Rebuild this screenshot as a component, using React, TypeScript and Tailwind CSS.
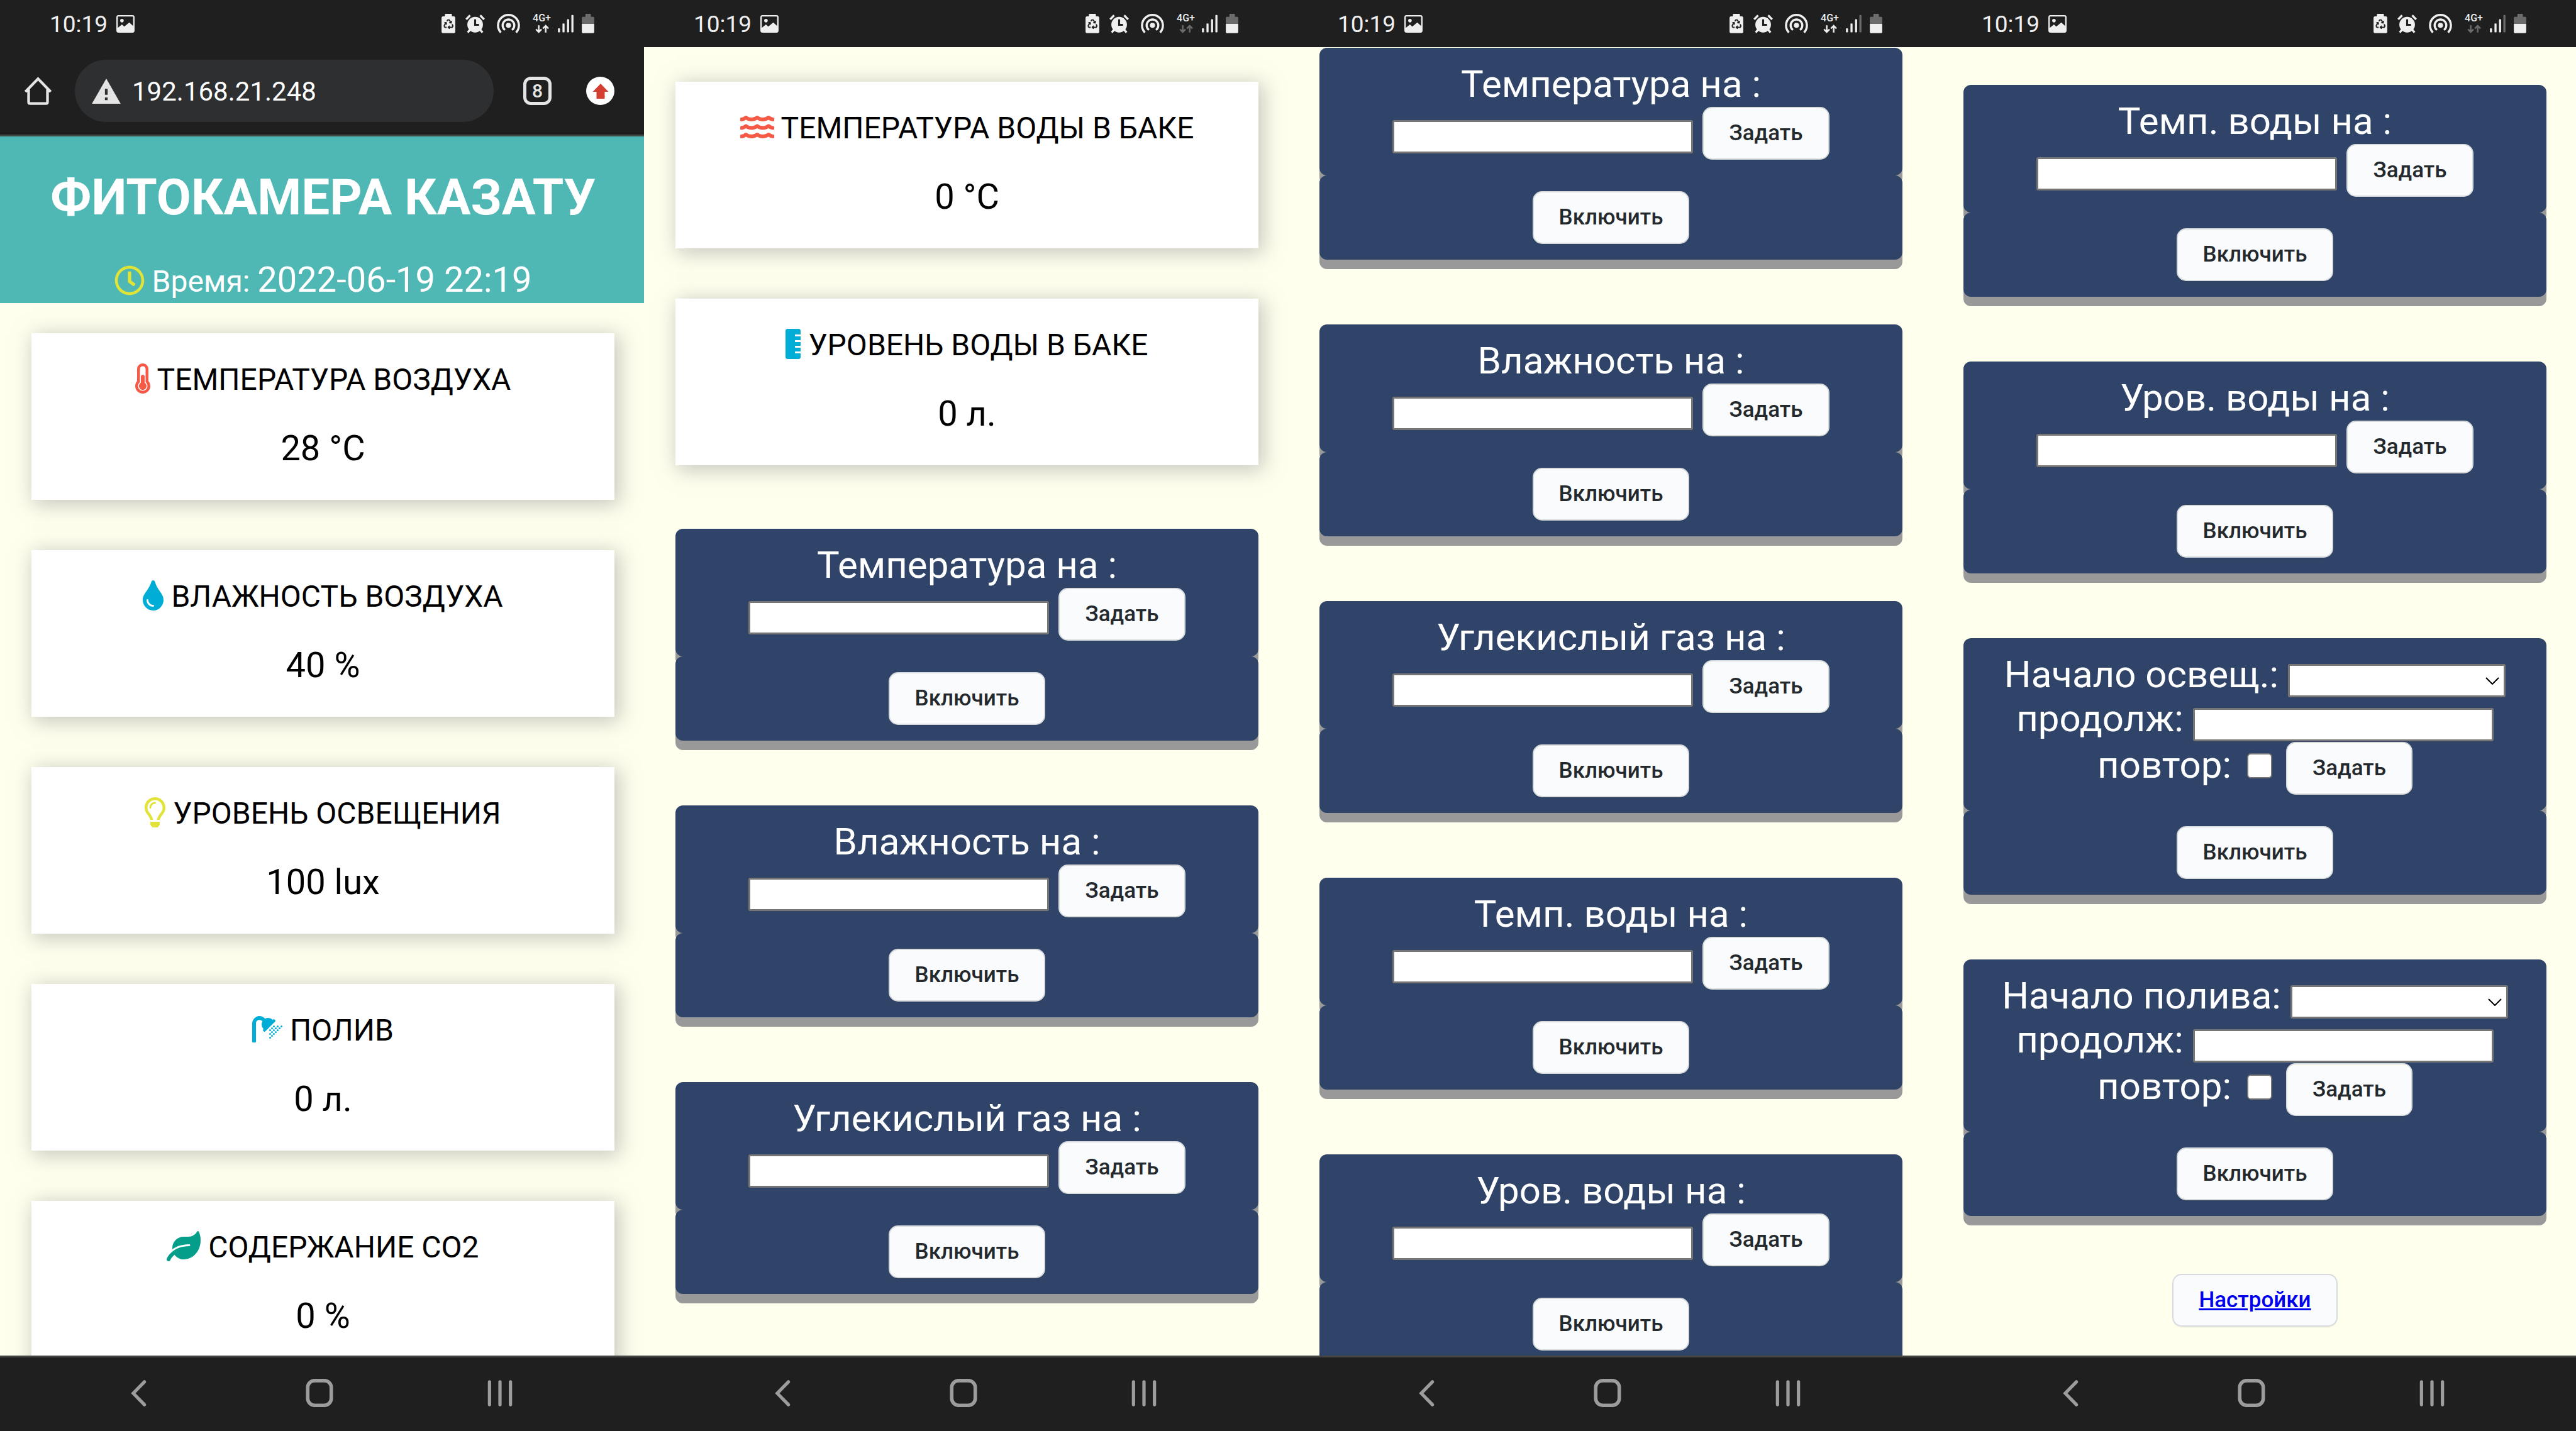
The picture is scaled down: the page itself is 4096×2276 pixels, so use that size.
import { useId, type ReactNode } from "react";
import {
  FaLeaf,
  FaRecycle,
  FaRegClock,
  FaRegLightbulb,
  FaRulerVertical,
  FaShower,
  FaThermometerHalf,
  FaTint,
  FaWater,
} from "react-icons/fa";

/* ---------- System bars ---------- */

type SignalProps = { weakSignal?: boolean; idleData?: boolean };

function StatusBar({ weakSignal = false, idleData = false }: SignalProps) {
  return (
    <header className="flex h-[75px] shrink-0 items-center bg-[#1f1f1f] pl-[79px] pr-[79px] text-[#efefef]">
      <span className="pt-[2px] text-[37px] leading-none">10:19</span>
      <svg viewBox="0 0 31 30" className="ml-[14px] h-[28px] w-[29px]" aria-hidden="true">
        <rect x="1.2" y="1.2" width="28.6" height="27.6" rx="2.5" fill="none" stroke="currentColor" strokeWidth="2.4" />
        <circle cx="9.5" cy="9.5" r="3" fill="currentColor" />
        <path d="M2 22 L9.500 16 L13.500 19.500 L22 12.500 L29 19 V28 H2 Z" fill="currentColor" />
      </svg>

      <svg viewBox="33 40 69 98" className="ml-auto h-[31px] w-[22px]" aria-hidden="true">
        <rect x="50" y="40" width="35" height="20" rx="4" fill="currentColor" />
        <rect x="33" y="53" width="69" height="84" rx="8" fill="currentColor" />
        <FaRecycle x={43} y={67} size={50} color="#1f1f1f" />
      </svg>
      <svg viewBox="151 41 100 96" className="ml-[16px] h-[30px] w-[31px]" aria-hidden="true">
        <g fill="none" stroke="currentColor" strokeWidth="11">
          <path d="M155 66 L175 45 M227 45 L247 66" />
          <path d="M163 133 L176 118 M239 133 L226 118" />
        </g>
        <circle cx="201" cy="93" r="40" fill="currentColor" />
        <path d="M201 66 V94 H221" fill="none" stroke="#1f1f1f" strokeWidth="10" />
      </svg>
      <svg viewBox="309 36 118 100" className="ml-[19px] h-[31px] w-[37px]" aria-hidden="true">
        <circle cx="368" cy="95" r="13" fill="currentColor" />
        <g fill="none" stroke="currentColor" strokeWidth="11">
          <path d="M350 119 A30 30 0 1 1 386 119" />
          <path d="M329 132 A53.500 53.500 0 1 1 407 132" />
        </g>
      </svg>
      <div className="ml-[20px] flex w-[29px] flex-col items-center">
        <span className="text-[16px] font-medium leading-[14px]">4G+</span>
        <svg viewBox="500 98 70 44" className="mt-[3px] h-[14px] w-[22px]" aria-hidden="true">
          <g fill="none" stroke={idleData ? "#6b6b6b" : "currentColor"} strokeWidth="8">
            <path d="M518 102 V136 M504 122 L518 136 L532 122" />
            <path d="M553 138 V104 M539 118 L553 104 L567 118" />
          </g>
        </svg>
      </div>
      <svg viewBox="614 44 83 93" className="ml-[11px] h-[29px] w-[25px]" fill="currentColor" aria-hidden="true">
        <rect x="614.500" y="115" width="11" height="22" rx="4" />
        <rect x="638.500" y="90" width="11" height="47" rx="4" />
        <rect x="662.500" y="67" width="11" height="70" rx="4" />
        <rect x="685.500" y="45" width="11" height="92" rx="4" fill={weakSignal ? "#6b6b6b" : "currentColor"} />
      </svg>
      <svg viewBox="738 39 63 99" className="ml-[13px] h-[31px] w-[20px]" aria-hidden="true">
        <rect x="756" y="39" width="28" height="20" rx="4" fill="#6b6b6b" />
        <path d="M743 54 H796 Q801 54 801 59 V90 H738 V59 Q738 54 743 54 Z" fill="#6b6b6b" />
        <path d="M738 90 H801 V132 Q801 137 796 137 H743 Q738 137 738 132 Z" fill="currentColor" />
      </svg>
    </header>
  );
}

function BrowserBar() {
  return (
    <div className="flex h-[142px] shrink-0 items-center border-b-[3px] border-[#3d4746] bg-[#1f1f1f] pl-[38px] pr-[47px] text-[#e4e4e4]">
      <button type="button" aria-label="Домой">
        <svg viewBox="0 0 48 48" className="size-[45px]" aria-hidden="true">
          <path
            d="M2.500 25.500 L24 3.500 L45.500 25.500 M8 21 V43 Q8 45.500 10.500 45.500 H37.500 Q40 45.500 40 43 V21"
            fill="none"
            stroke="currentColor"
            strokeWidth="4.600"
          />
        </svg>
      </button>
      <div className="ml-[36px] flex h-[99px] flex-1 items-center rounded-full bg-[#2e2f31] pl-[27px]">
        <svg viewBox="0 0 48 42" className="h-[40px] w-[46px] shrink-0" aria-hidden="true">
          <path d="M24 0 L48 42 H0 Z" fill="currentColor" />
          <path d="M24 17 V27 M24 31.500 V36" stroke="#2e2f31" strokeWidth="4.500" />
        </svg>
        <input
          type="text"
          aria-label="Адрес"
          defaultValue="192.168.21.248"
          className="ml-[18px] h-[70px] w-full min-w-0 flex-1 bg-transparent pt-[2px] text-[42px] text-white outline-none"
        />
      </div>
      <button
        type="button"
        className="ml-[47px] flex size-[45px] items-center justify-center rounded-[12px] border-[5px] border-[#e4e4e4] text-[30px] font-medium leading-none"
      >
        8
      </button>
      <button
        type="button"
        aria-label="Обновить"
        className="ml-[55px] flex size-[45px] items-center justify-center rounded-full bg-white"
      >
        <svg viewBox="0 0 24 24" className="size-[26px]" aria-hidden="true">
          <path d="M12 1 L23.500 13 H18 V23 H6 V13 H0.500 Z" fill="#d23f31" />
        </svg>
      </button>
    </div>
  );
}

function NavigationBar() {
  return (
    <nav className="flex h-[120px] shrink-0 items-center justify-between border-t-[3px] border-[#444543] bg-[#1f1f1f] pb-[4px] pl-[198px] pr-[207px] text-[#9c9c9c]">
      <button type="button" aria-label="Назад" className="flex w-[44px] justify-center">
        <svg viewBox="0 0 26 44" className="h-[42px] w-[25px]" aria-hidden="true">
          <path d="M22.500 3 L4 22 L22.500 41" fill="none" stroke="currentColor" strokeWidth="5.500" strokeLinecap="round" />
        </svg>
      </button>
      <button type="button" aria-label="Главный экран" className="flex w-[44px] justify-center">
        <svg viewBox="0 0 46 48" className="h-[45px] w-[44px]" aria-hidden="true">
          <rect x="3" y="3" width="40" height="42" rx="12" fill="none" stroke="currentColor" strokeWidth="6" />
        </svg>
      </button>
      <button type="button" aria-label="Недавние" className="flex w-[44px] justify-center">
        <svg viewBox="0 0 42 44" className="h-[42px] w-[40px]" aria-hidden="true">
          <path d="M3.500 3 V41 M21 3 V41 M38.500 3 V41" fill="none" stroke="currentColor" strokeWidth="5.500" strokeLinecap="round" />
        </svg>
      </button>
    </nav>
  );
}

function Phone({ bar, children, ...signal }: SignalProps & { bar?: ReactNode; children: ReactNode }) {
  return (
    <section className="flex h-screen min-w-0 flex-col overflow-hidden">
      <StatusBar {...signal} />
      {bar}
      <main className="min-h-0 flex-1 overflow-hidden bg-[#ffffee]">{children}</main>
      <NavigationBar />
    </section>
  );
}

/* ---------- Page content ---------- */

const buttonBase =
  "rounded-[15px] border-2 border-[#d7dadd] bg-[#fafbfc] px-[40px] py-[15px] text-[35px] leading-[50px] font-medium shadow-[0_2px_0_rgba(27,31,35,0.04)]";
const buttonClass = `${buttonBase} text-[#24292e]`;
const fieldClass = "h-[53px] rounded-[3px] border-[3px] border-[#767676] bg-white text-[33px] text-black";
const panelClass = "rounded-[12px] bg-[#2f4468] py-[25px] shadow-[0_15px_0_#999999]";
const iconClass = "inline-block h-[48px] align-[-6px]";

function ReadingCard({ icon, title, value }: { icon: ReactNode; title: string; value: string }) {
  return (
    <article className="flex h-[265px] shrink-0 flex-col gap-[48px] bg-white pt-[46px] text-center text-black shadow-[5px_5px_30px_2px_rgba(140,140,140,0.5)]">
      <h2 className="text-[48px] leading-[56px]">
        {icon} {title}
      </h2>
      <p className="text-[56px] leading-[66px]">{value}</p>
    </article>
  );
}

function SwitchPanel() {
  return (
    <div className={panelClass}>
      <div className="flex justify-center">
        <button type="button" className={buttonClass}>
          Включить
        </button>
      </div>
    </div>
  );
}

function SetpointCard({ title }: { title: string }) {
  const id = useId();
  return (
    <article className="shrink-0">
      <form className={panelClass}>
        <label htmlFor={id} className="block pb-[3px] text-center text-[60px] leading-[66px] text-white">
          {title}
        </label>
        <div className="flex items-end justify-center gap-[15px]">
          <input id={id} type="text" className={`${fieldClass} mb-[10px] w-[478px]`} />
          <button type="button" className={buttonClass}>
            Задать
          </button>
        </div>
      </form>
      <SwitchPanel />
    </article>
  );
}

function ScheduleCard({ title }: { title: string }) {
  const id = useId();
  return (
    <article className="shrink-0">
      <form className={`${panelClass} text-[60px] leading-[66px] text-white`}>
        <div className="flex items-end justify-center gap-[15px]">
          <label htmlFor={`${id}-start`} className="pb-[4px]">
            {title}
          </label>
          <div className="relative mb-px flex">
            <select id={`${id}-start`} className={`${fieldClass} w-[346px] appearance-none`} />
            <svg
              viewBox="0 0 22 12"
              className="pointer-events-none absolute right-[10px] top-[21px] h-[12px] w-[22px]"
              aria-hidden="true"
            >
              <path d="M1 1 L11 11 L21 1" fill="none" stroke="#000000" strokeWidth="2" />
            </svg>
          </div>
        </div>
        <div className="flex items-end justify-center gap-[15px]">
          <label htmlFor={`${id}-duration`} className="pb-[4px]">
            продолж:
          </label>
          <input id={`${id}-duration`} type="text" className={`${fieldClass} mb-px w-[478px]`} />
        </div>
        <div className="flex items-start justify-center">
          <label htmlFor={`${id}-repeat`} className="leading-[73px]">
            повтор:
          </label>
          <input
            id={`${id}-repeat`}
            type="checkbox"
            className="ml-[25px] mr-[22px] mt-[18px] size-[40px] appearance-none rounded-[6px] border-2 border-[#767676] bg-white checked:bg-[#1a73e8]"
          />
          <button type="button" className={buttonClass}>
            Задать
          </button>
        </div>
      </form>
      <SwitchPanel />
    </article>
  );
}

function CardStack({ children }: { children: ReactNode }) {
  return <div className="flex flex-col gap-[80px] pl-[50px] pr-[47px]">{children}</div>;
}

function ControlStack({ children }: { children: ReactNode }) {
  return <div className="flex flex-col gap-[103px] pl-[50px] pr-[47px]">{children}</div>;
}

export default function App() {
  return (
    <div className="grid h-screen grid-cols-4 overflow-hidden bg-[#ffffee] font-['Roboto',sans-serif]">
      <Phone bar={<BrowserBar />}>
        <div className="bg-[#50b8b4] pl-[3px] pt-[50px] text-center text-white">
          <h1 className="text-[80px] font-bold leading-[94px]">ФИТОКАМЕРА КАЗАТУ</h1>
          <p className="mt-[53px] text-[48px] leading-[68px]">
            <FaRegClock className={`${iconClass} w-[48px] text-[#e1e437]`} /> Время:{" "}
            <span className="text-[56px] leading-none">2022-06-19 22:19</span>
          </p>
        </div>
        <div className="pt-[48px]">
          <CardStack>
            <ReadingCard
              icon={<FaThermometerHalf className={`${iconClass} w-[24px] text-[#f55a47]`} />}
              title="ТЕМПЕРАТУРА ВОЗДУХА"
              value="28 °C"
            />
            <ReadingCard
              icon={<FaTint className={`${iconClass} w-[33px] text-[#00add6]`} />}
              title="ВЛАЖНОСТЬ ВОЗДУХА"
              value="40 %"
            />
            <ReadingCard
              icon={<FaRegLightbulb className={`${iconClass} w-[33px] text-[#e1e437]`} />}
              title="УРОВЕНЬ ОСВЕЩЕНИЯ"
              value="100 lux"
            />
            <ReadingCard
              icon={<FaShower className={`${iconClass} w-[48px] text-[#00add6]`} />}
              title="ПОЛИВ"
              value="0 л."
            />
            <ReadingCard
              icon={<FaLeaf className={`${iconClass} w-[54px] text-[#059e8a]`} />}
              title="СОДЕРЖАНИЕ CO2"
              value="0 %"
            />
          </CardStack>
        </div>
      </Phone>

      <Phone idleData>
        <div className="pt-[55px]">
          <CardStack>
            <ReadingCard
              icon={<FaWater className={`${iconClass} w-[54px] text-[#f55a47]`} />}
              title="ТЕМПЕРАТУРА ВОДЫ В БАКЕ"
              value="0 °C"
            />
            <ReadingCard
              icon={<FaRulerVertical className={`${iconClass} w-[24px] text-[#00add6]`} />}
              title="УРОВЕНЬ ВОДЫ В БАКЕ"
              value="0 л."
            />
          </CardStack>
        </div>
        <div className="pt-[101px]">
          <ControlStack>
            <SetpointCard title="Температура на :" />
            <SetpointCard title="Влажность на :" />
            <SetpointCard title="Углекислый газ на :" />
          </ControlStack>
        </div>
      </Phone>

      <Phone weakSignal>
        <div className="pt-px">
          <ControlStack>
            <SetpointCard title="Температура на :" />
            <SetpointCard title="Влажность на :" />
            <SetpointCard title="Углекислый газ на :" />
            <SetpointCard title="Темп. воды на :" />
            <SetpointCard title="Уров. воды на :" />
          </ControlStack>
        </div>
      </Phone>

      <Phone weakSignal idleData>
        <div className="pt-[60px]">
          <ControlStack>
            <SetpointCard title="Темп. воды на :" />
            <SetpointCard title="Уров. воды на :" />
            <ScheduleCard title="Начало освещ.:" />
            <ScheduleCard title="Начало полива:" />
          </ControlStack>
        </div>
        <div className="flex justify-center pl-[3px] pt-[92px]">
          <a href="#settings" className={`${buttonBase} text-[#0000ee] underline`}>
            Настройки
          </a>
        </div>
      </Phone>
    </div>
  );
}
